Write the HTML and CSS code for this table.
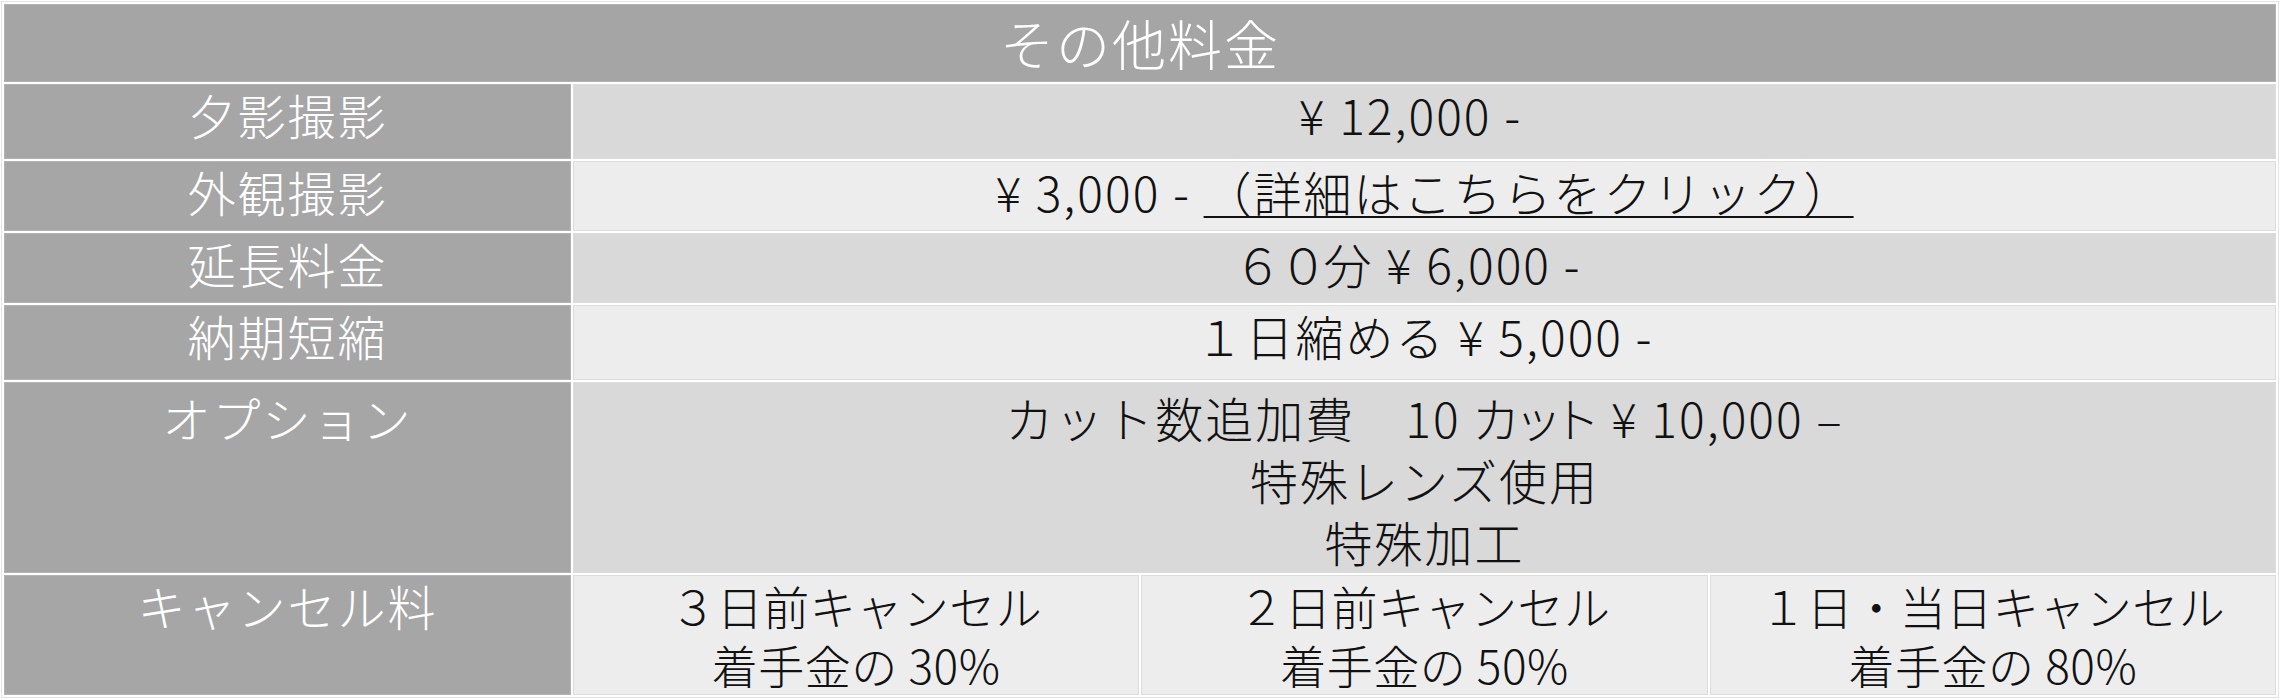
FILE: index.html
```html
<!DOCTYPE html>
<html lang="ja">
<head>
<meta charset="utf-8">
<title>その他料金</title>
<link rel="stylesheet" href="styles.css">
</head>
<body>
<table class="price-table">
  <colgroup>
    <col class="col-label">
    <col class="col-value">
    <col class="col-value">
    <col class="col-value">
  </colgroup>
  <tr class="row-head">
    <th class="title" colspan="4">その他料金</th>
  </tr>
  <tr class="row-a">
    <th class="label single">夕影撮影</th>
    <td class="value dark single trail" colspan="3">¥ 12,000 -</td>
  </tr>
  <tr class="row-b">
    <th class="label single">外観撮影</th>
    <td class="value light single" colspan="3">¥ 3,000 - <a class="detail-link" href="#">（詳細はこちらをクリック）</a></td>
  </tr>
  <tr class="row-b">
    <th class="label single">延長料金</th>
    <td class="value dark single trail" colspan="3"><span class="prop spaced">６</span><span class="prop">０</span>分 ¥ 6,000 -</td>
  </tr>
  <tr class="row-a">
    <th class="label single">納期短縮</th>
    <td class="value light single" colspan="3">１日縮める ¥ 5,000 -</td>
  </tr>
  <tr class="row-option">
    <th class="label">オプション</th>
    <td class="value dark multi" colspan="3">カット数追加費　10 <span class="palt">カット</span> ¥ 10,000 –<br>特殊レンズ使用<br>特殊加工</td>
  </tr>
  <tr class="row-cancel">
    <th class="label">キャンセル料</th>
    <td class="value light multi">３日前キャンセル<br>着手金の 30%</td>
    <td class="value light multi">２日前キャンセル<br>着手金の 50%</td>
    <td class="value light multi">１日・当日キャンセル<br>着手金の 80%</td>
  </tr>
</table>
</body>
</html>
```

FILE: styles.css
```css
html, body {
  margin: 0;
  padding: 0;
  background: #ffffff;
}

body {
  font-family: "Noto Sans CJK JP", "Noto Sans", sans-serif;
  font-weight: 300;
}

.price-table {
  width: calc(100% - 2px);
  margin: 1px;
  border: 1px solid #e2e2e2;
  border-spacing: 2px;
  table-layout: fixed;
}

.col-label {
  width: 567px;
}

.price-table th,
.price-table td {
  padding: 0;
  vertical-align: top;
  text-align: center;
  font-size: 48px;
  line-height: 60px;
  letter-spacing: 2px;
  font-weight: 300;
  border: 1px solid #dcdcdc;
}

.price-table .title {
  background: #a5a5a5;
  color: #ffffff;
  font-size: 54px;
  line-height: 70px;
  padding-top: 3px;
  border-color: #b2b2b2;
}

.price-table .label {
  background: #a6a6a6;
  color: #ffffff;
  border-color: #b3b3b3;
}

.value {
  color: #111111;
}

.dark {
  background: #d9d9d9;
}

.light {
  background: #ededed;
}

.row-head { height: 78px; }
.row-a { height: 75px; }
.row-b { height: 70px; }
.row-option { height: 189px; }
.row-cancel { height: 118px; }

.price-table .single {
  line-height: 56px;
  padding-top: 1px;
}

.price-table .trail {
  padding-right: 28px;
}

.price-table .row-option .multi {
  line-height: 62px;
  padding-top: 3px;
}

.price-table .row-option .label {
  line-height: 62px;
  padding-top: 3px;
}

.price-table .row-cancel .label {
  line-height: 59px;
  padding-top: 0;
}

.price-table .row-cancel .multi {
  font-size: 46px;
  letter-spacing: 0.5px;
  line-height: 59px;
  padding-top: 0;
}

.detail-link {
  color: #111111;
  text-decoration: underline;
  text-decoration-thickness: 2px;
  text-underline-offset: 4px;
}

.palt,
.prop {
  font-feature-settings: "palt";
}

.prop {
  letter-spacing: 2px;
}

.prop.spaced {
  letter-spacing: 9px;
}
```
